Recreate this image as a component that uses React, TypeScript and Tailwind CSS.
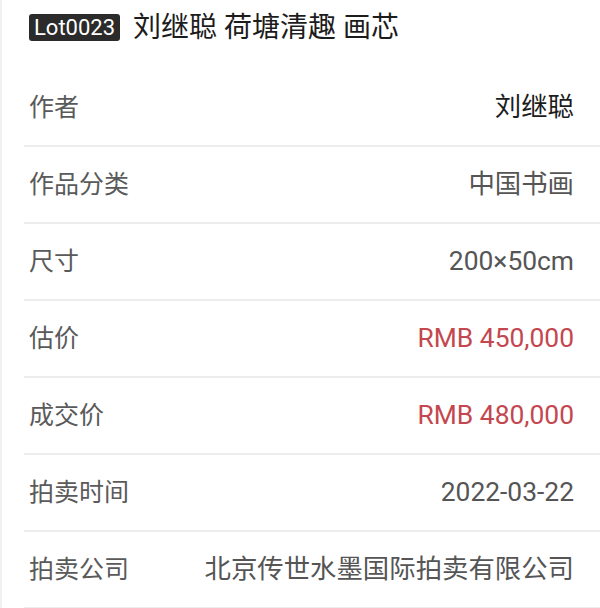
import React from "react";

const font = { fontFamily: 'Roboto, "Noto Sans CJK SC", sans-serif' };

const rows: { label: string; value: string; cls: string }[] = [
  { label: "作者", value: "刘继聪", cls: "text-[#1c1c1c]" },
  { label: "作品分类", value: "中国书画", cls: "text-[#555555]" },
  { label: "尺寸", value: "200×50cm", cls: "text-[#555555]" },
  { label: "估价", value: "RMB 450,000", cls: "text-[#c4474f]" },
  { label: "成交价", value: "RMB 480,000", cls: "text-[#c4474f]" },
  { label: "拍卖时间", value: "2022-03-22", cls: "text-[#555555]" },
  { label: "拍卖公司", value: "北京传世水墨国际拍卖有限公司", cls: "text-[#555555]" },
];

export default function App() {
  return (
    <div
      className="w-[600px] h-[608px] bg-white border-l-2 border-[#f1f1f1] overflow-hidden"
      style={font}
    >
      <div className="h-[70px] flex items-center pl-[27px] pb-[17px] pt-[2px]">
        <span className="bg-[#2b2b2b] text-white text-[22px] leading-[27px] h-[27px] px-[5px] rounded-[3px]">
          Lot0023
        </span>
        <span className="ml-[13px] text-[28px] text-[#1c1c1c] leading-none">
          刘继聪 荷塘清趣 画芯
        </span>
      </div>
      <div className="ml-[22px]">
        {rows.map((r) => (
          <div
            key={r.label}
            className="h-[77px] flex items-center justify-between border-b-2 border-[#ececec] pl-[5px] pr-[26px]"
          >
            <span className="text-[25px] text-[#5a5a5a]">{r.label}</span>
            <span className={"text-[26.4px] " + r.cls}>{r.value}</span>
          </div>
        ))}
      </div>
    </div>
  );
}
